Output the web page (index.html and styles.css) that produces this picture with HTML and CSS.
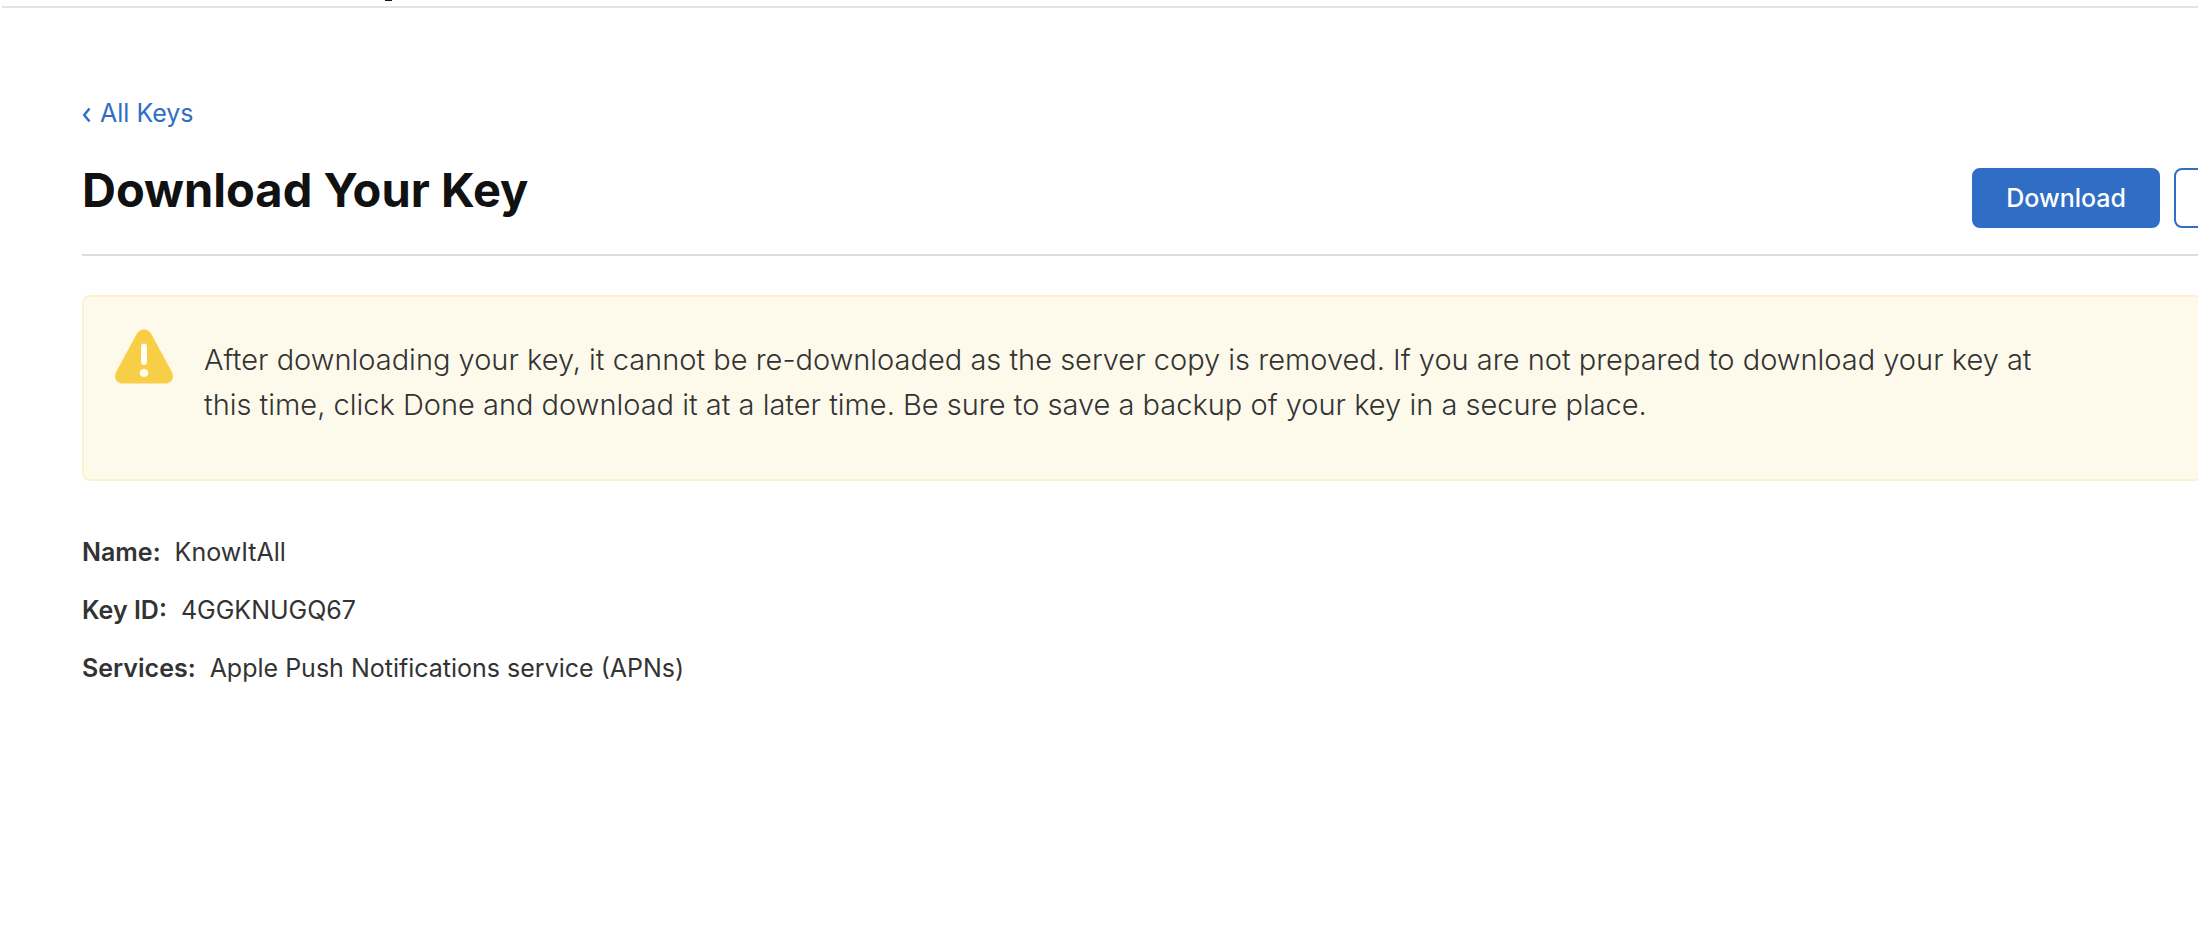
FILE: index.html
```
<!DOCTYPE html>
<html lang="en">
<head>
<meta charset="utf-8">
<title>Download Your Key</title>
<link rel="stylesheet" href="styles.css">
</head>
<body>
<header class="site-header"><span class="site-header-mark"></span></header>
<main class="page">
  <a class="back-link" href="#"><svg class="back-icon" viewBox="0 0 10 26" aria-hidden="true"><path d="M7.5 8.5 2.2 15l5.3 6.5"/></svg>All Keys</a>
  <div class="title-bar">
    <h1 class="title">Download Your Key</h1>
    <div class="actions">
      <button class="button button-primary" type="button">Download</button>
      <button class="button button-outline" type="button" aria-label="Done"></button>
    </div>
  </div>
  <section class="alert" role="note">
    <svg class="alert-icon" viewBox="0 0 60 56" aria-hidden="true">
      <path class="alert-shape" d="M22.5 5.2C26-1.2 34-1.2 37.500 5.200L57.600 42.400C61 48.600 57.500 54.500 51 54.500H9C2.500 54.500-1 48.600 2.400 42.400Z"/>
      <path class="alert-bar" d="M30 17.500V33"/>
      <ellipse class="alert-dot" cx="30" cy="44" rx="4.300" ry="4"/>
    </svg>
    <p class="alert-text">After downloading your key, it cannot be re-downloaded as the server copy is removed. If you are not prepared to download your key at this time, click Done and download it at a later time. Be sure to save a backup of your key in a secure place.</p>
  </section>
  <dl class="details">
    <div class="detail"><dt>Name:</dt><dd>KnowItAll</dd></div>
    <div class="detail"><dt>Key ID:</dt><dd>4GGKNUGQ67</dd></div>
    <div class="detail"><dt>Services:</dt><dd>Apple Push Notifications service (APNs)</dd></div>
  </dl>
</main>
</body>
</html>
```
FILE: styles.css
```
* { box-sizing: border-box; }
body {
  margin: 0;
  overflow: hidden;
  background: #fff;
  color: #333;
  font: 400 25px/38px Inter, "Liberation Sans", sans-serif;
}
.site-header {
  display: flex;
  height: 8px;
  margin-left: 2px;
  border-bottom: 2px solid #e4e4e4;
}
.site-header-mark {
  width: 7px;
  height: 1px;
  margin-left: 383px;
  background: #111;
}
.page { padding: 86px 0 0 82px; margin-right: -106px; }
.back-link {
  display: inline-flex;
  align-items: center;
  gap: 8px;
  color: #2f6ec4;
  text-decoration: none;
}
.back-icon {
  width: 10px;
  height: 26px;
  fill: none;
  stroke: currentColor;
  stroke-width: 2.4;
}
.title-bar {
  display: flex;
  justify-content: space-between;
  align-items: flex-start;
  margin-top: 24px;
  padding-bottom: 26px;
  border-bottom: 2px solid #ddd;
}
.title {
  margin: 0;
  color: #111;
  font-size: 47px;
  line-height: 60px;
  font-weight: 700;
}
.actions { display: flex; gap: 14px; padding-top: 8px; }
.button {
  height: 60px;
  min-width: 130px;
  padding: 0 32px;
  border: 2px solid #2f6ec4;
  border-radius: 8px;
  font: inherit;
  font-weight: 500;
}
.button-primary { background: #2f6ec4; color: #fff; }
.button-outline { background: #fff; color: #2f6ec4; }
.alert {
  display: flex;
  align-items: flex-start;
  gap: 30px;
  margin-top: 39px;
  padding: 32px 30px 52px;
  border: 2px solid #fdf2cc;
  border-radius: 8px;
  background: #fefaeb;
}
.alert-icon { flex: none; width: 60px; height: 56px; }
.alert-shape { fill: #f8ce46; }
.alert-bar { stroke: #fffdf5; stroke-width: 6; stroke-linecap: round; }
.alert-dot { fill: #fffdf5; }
.alert-text {
  max-width: 1860px;
  margin: 8px 0 0;
  font-size: 29px;
  line-height: 45px;
  font-weight: 300;
}
.details { display: grid; gap: 20px; margin: 52px 0 0; }
.detail { display: flex; gap: 14px; }
.detail dt { font-weight: 600; }
.detail dd { margin: 0; }
```
